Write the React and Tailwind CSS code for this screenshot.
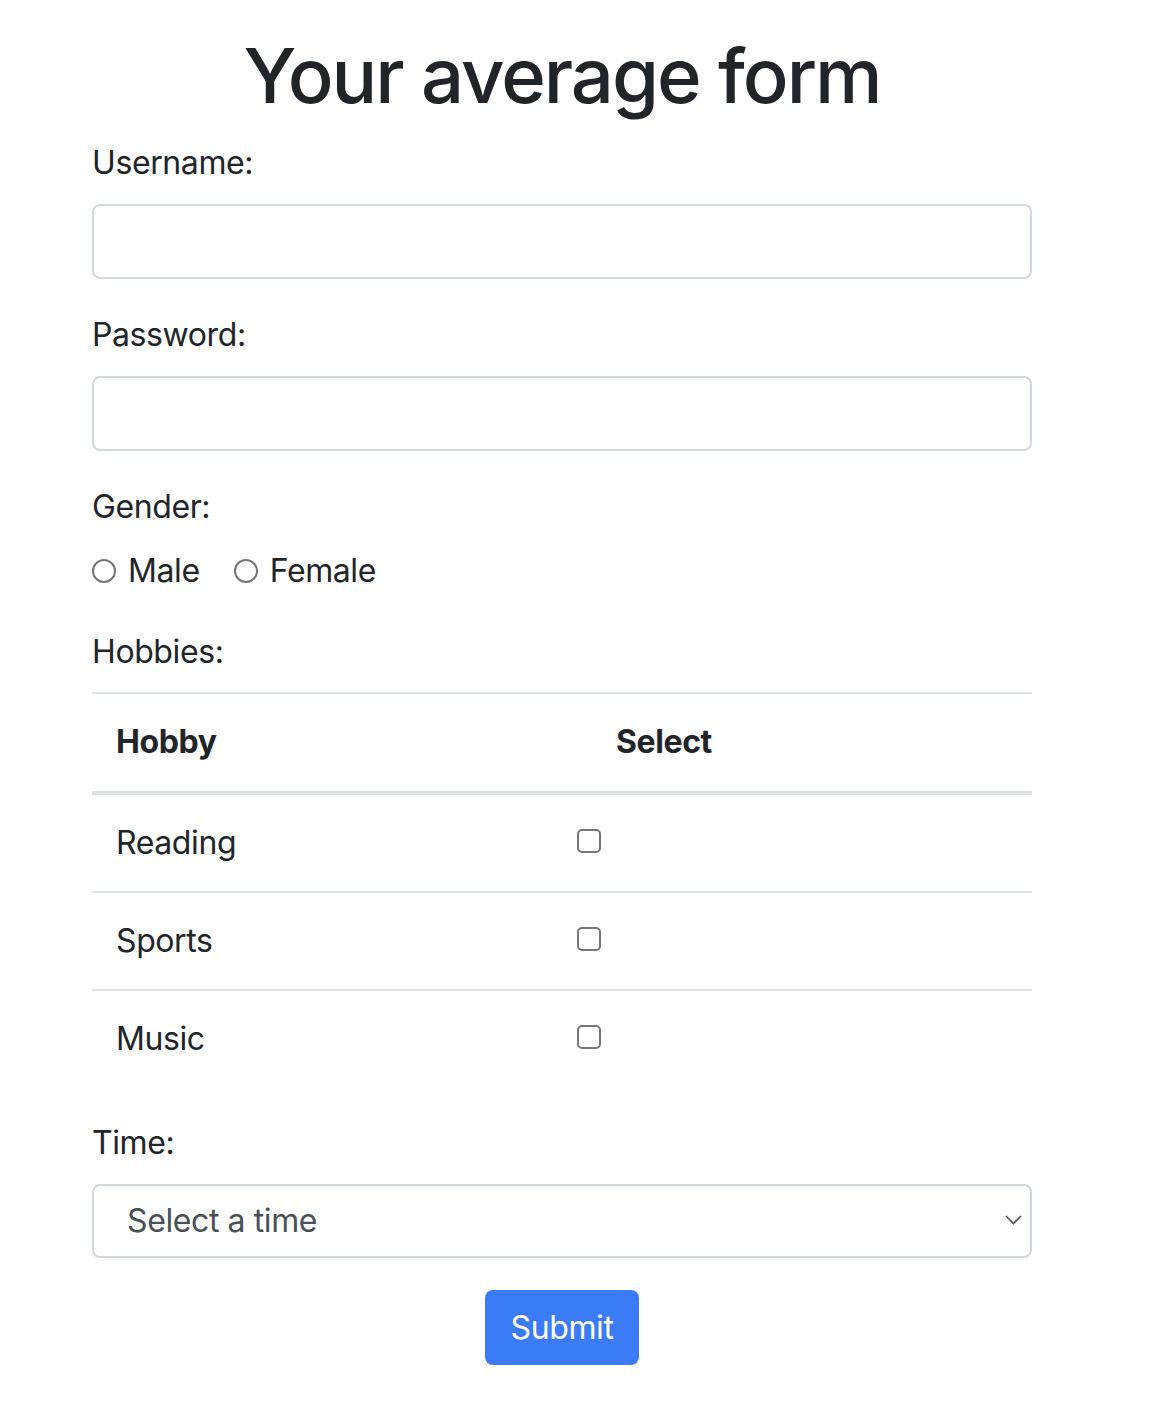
import React from 'react';

const hobbies = ['Reading', 'Sports', 'Music'];

export default function App() {
  return (
    <div className="min-h-[1418px] bg-white text-[#212529] font-['Inter','Liberation_Sans',sans-serif]">
      <form className="ml-[92px] w-[940px] pt-[27px] tracking-[-0.4px]">
        <h1 className="text-center text-[76px] leading-[96px] font-medium tracking-[-2px] mb-[16px]">
          Your average form
        </h1>

        <label className="block text-[32px] leading-[48px] mb-[17px]">Username:</label>
        <input type="text" className="block w-full h-[75px] border-2 border-[#d4d8dc] rounded-[8px] mb-[32px]" />

        <label className="block text-[32px] leading-[48px] mb-[17px]">Password:</label>
        <input type="password" className="block w-full h-[75px] border-2 border-[#d4d8dc] rounded-[8px] mb-[32px]" />

        <label className="block text-[32px] leading-[48px] mb-[16px]">Gender:</label>
        <div className="flex items-center gap-[34px] text-[32px] leading-[48px] mb-[33px]">
          <label className="flex items-center gap-[12px]">
            <span className="w-[24px] h-[24px] rounded-full border-2 border-[#767676]" />
            Male
          </label>
          <label className="flex items-center gap-[12px]">
            <span className="w-[24px] h-[24px] rounded-full border-2 border-[#767676]" />
            Female
          </label>
        </div>

        <label className="block text-[32px] leading-[48px] mb-[16px]">Hobbies:</label>
        <table className="w-full text-[32px] leading-[48px] border-collapse">
          <thead>
            <tr className="border-t-2 border-[#dee2e6] border-b-4">
              <th className="w-[500px] text-left font-bold px-[24px] pt-[24px] pb-[25px]">Hobby</th>
              <th className="text-left font-bold px-[24px] pt-[24px] pb-[25px]">Select</th>
            </tr>
          </thead>
          <tbody>
            {hobbies.map((h, i) => (
              <tr key={h} className={i < hobbies.length - 1 ? 'border-b-2 border-[#dee2e6]' : ''}>
                <td className="px-[24px] pt-[24px] pb-[24px]">{h}</td>
                <td className="px-[24px] pt-[24px] pb-[24px]">
                  <span className="block w-[24px] h-[24px] -ml-[39px] -mt-[4px] rounded-[5px] border-2 border-[#767676]" />
                </td>
              </tr>
            ))}
          </tbody>
        </table>

        <label className="block text-[32px] leading-[48px] mt-[32px] mb-[17px]">Time:</label>
        <div className="relative w-full h-[74px] border-2 border-[#d4d8dc] rounded-[8px] flex items-center pl-[33px] text-[32px] text-[#495057] mb-[32px]">
          Select a time
          <svg className="absolute right-[8px] top-[28px]" width="17" height="12" viewBox="0 0 17 12" fill="none">
            <path d="M1 2l7.5 7.5L16 2" stroke="#555" strokeWidth="1.6" />
          </svg>
        </div>

        <div className="flex justify-center">
          <button type="button" className="w-[154px] h-[75px] rounded-[8px] bg-[#3b7cf6] text-white text-[32px] tracking-[-0.4px]">
            Submit
          </button>
        </div>
      </form>
    </div>
  );
}
